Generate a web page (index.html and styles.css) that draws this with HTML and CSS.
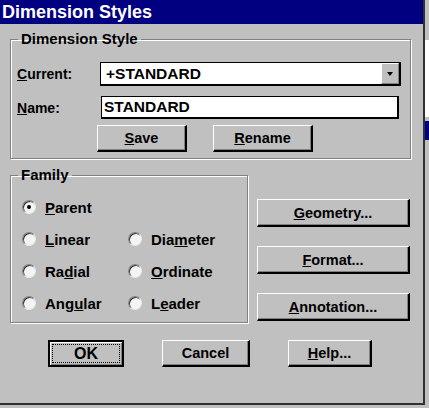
FILE: index.html
```html
<!DOCTYPE html>
<html lang="en">
<head>
    <meta charset="UTF-8">
    <title>Dimension Styles</title>
    <link rel="stylesheet" href="styles.css">
</head>
<body>
    <div class="screen">
        <div class="dialog">
            <div class="titlebar">Dimension Styles</div>

            <!-- Dimension style group -->
            <fieldset class="group style-group">
                <legend>Dimension Style</legend>
                <div class="style-rows">
                    <div class="form-row">
                        <span class="form-label"><u>C</u>urrent:</span>
                        <div class="combo">
                            <span class="combo-value">+STANDARD</span>
                            <span class="combo-btn"><span class="arrow"></span></span>
                        </div>
                    </div>
                    <div class="form-row row-gap">
                        <span class="form-label"><u>N</u>ame:</span>
                        <div class="field">STANDARD</div>
                    </div>
                    <div class="btn-row">
                        <button class="btn btn-save"><u>S</u>ave</button>
                        <button class="btn btn-rename"><u>R</u>ename</button>
                    </div>
                </div>
            </fieldset>

            <div class="middle">
                <!-- Family group -->
                <fieldset class="group family-group">
                    <legend>Family</legend>
                    <div class="radios">
                        <label class="radio-item wide"><span class="radio on"></span><span><u>P</u>arent</span></label>
                        <label class="radio-item"><span class="radio"></span><span><u>L</u>inear</span></label>
                        <label class="radio-item"><span class="radio"></span><span>Dia<u>m</u>eter</span></label>
                        <label class="radio-item"><span class="radio"></span><span>Ra<u>d</u>ial</span></label>
                        <label class="radio-item"><span class="radio"></span><span><u>O</u>rdinate</span></label>
                        <label class="radio-item"><span class="radio"></span><span>Ang<u>u</u>lar</span></label>
                        <label class="radio-item"><span class="radio"></span><span>L<u>e</u>ader</span></label>
                    </div>
                </fieldset>

                <div class="side">
                    <button class="btn side-btn"><u>G</u>eometry...</button>
                    <button class="btn side-btn"><u>F</u>ormat...</button>
                    <button class="btn side-btn"><u>A</u>nnotation...</button>
                </div>
            </div>

            <div class="footer">
                <button class="btn btn-default btn-ok"><span>OK</span></button>
                <button class="btn btn-cancel">Cancel</button>
                <button class="btn btn-help"><u>H</u>elp...</button>
            </div>
        </div>

        <!-- window behind the dialog -->
        <div class="backdrop">
            <div class="bd-white"></div>
            <div class="bd-title"></div>
        </div>
    </div>
</body>
</html>
```

FILE: styles.css
```css
/* Page */
body {
    margin: 0;
    background-color: #c0c0c0;
    font-family: "Liberation Sans", Arial, sans-serif;
    font-weight: bold;
    color: #000;
}

.screen {
    display: flex;
    width: 429px;
    height: 408px;
    overflow: hidden;
}

/* Dialog window */
.dialog {
    flex: none;
    width: 423px;
    height: 403px;
    background-color: #c0c0c0;
    border-right: 2px solid #303030;
    border-bottom: 2px solid #303030;
    display: flex;
    flex-direction: column;
}

.titlebar {
    height: 24px;
    line-height: 24px;
    background-color: #000080;
    color: #fff;
    font-size: 18px;
    padding-left: 2px;
}

/* Group boxes */
.group {
    margin: 0;
    padding: 0;
    min-width: 0;
    border: 1px solid #808080;
    box-shadow: 1px 1px 0 #fff, inset 1px 1px 0 #fff;
}

.group legend {
    font-size: 15px;
    line-height: 16px;
    padding: 0 3px;
    margin-left: 7px;
}

.style-group {
    margin: 7px 12px 0 10px;
}

.style-rows {
    padding: 15px 0 6px 6px;
}

.form-row {
    display: flex;
    align-items: center;
}

.row-gap {
    margin-top: 10px;
}

.form-label {
    width: 83px;
    font-size: 14px;
}

/* Combo box */
.combo {
    display: flex;
    box-sizing: border-box;
    width: 301px;
    height: 24px;
    background-color: #fff;
    border: 1px solid #000;
    border-right-width: 2px;
    border-bottom-width: 2px;
}

.combo-value {
    flex: 1;
    padding-left: 5px;
    font-size: 15.5px;
    line-height: 21px;
}

.combo-btn {
    box-sizing: border-box;
    width: 18px;
    background-color: #c0c0c0;
    border: 1px solid;
    border-color: #fff #808080 #808080 #fff;
    display: flex;
    align-items: center;
    justify-content: center;
}

.arrow {
    width: 0;
    height: 0;
    border-left: 3.5px solid transparent;
    border-right: 3.5px solid transparent;
    border-top: 4px solid #000;
}

.field {
    box-sizing: border-box;
    margin-left: 1px;
    width: 298px;
    height: 23px;
    background-color: #fff;
    border: 1px solid #000;
    border-right-width: 2px;
    border-bottom-width: 2px;
    padding-left: 2px;
    font-size: 15.5px;
    line-height: 20px;
}

/* Push buttons */
.btn {
    box-sizing: border-box;
    height: 27px;
    padding: 0;
    background-color: #c0c0c0;
    border: 1px solid;
    border-right-width: 2px;
    border-bottom-width: 2px;
    border-color: #fff #000 #000 #fff;
    box-shadow: inset -1px -1px 0 #808080;
    font-family: inherit;
    font-weight: bold;
    font-size: 14.5px;
    color: #000;
}

.btn u,
.radio-item u,
.form-label u {
    text-underline-offset: 1px;
}

.btn-row {
    display: flex;
    gap: 26px;
    margin-top: 6px;
    padding-left: 80px;
}

.btn-save {
    width: 90px;
}

.btn-rename {
    width: 100px;
}

/* Family + side buttons */
.middle {
    display: flex;
    margin-top: 8px;
}

.family-group {
    margin-left: 10px;
    width: 238px;
    box-sizing: border-box;
}

.radios {
    display: grid;
    grid-template-columns: 106px 1fr;
    grid-auto-rows: 32px;
    padding: 8px 0 3px 11px;
}

.radio-item {
    display: flex;
    align-items: center;
    gap: 9px;
    font-size: 15px;
}

.radio-item.wide {
    grid-column: 1 / -1;
}

.radio {
    position: relative;
    flex: none;
    box-sizing: border-box;
    width: 14px;
    height: 14px;
    border-radius: 50%;
    background-color: #f4f4f4;
    border: 1px solid;
    border-color: #808080 #e8e8e8 #e8e8e8 #808080;
    box-shadow: inset 1px 1px 0 #303030;
}

.radio.on::after {
    content: "";
    position: absolute;
    left: 4px;
    top: 4px;
    width: 4px;
    height: 4px;
    border-radius: 50%;
    background-color: #000;
}

.side {
    display: flex;
    flex-direction: column;
    gap: 19px;
    margin-left: 9px;
    padding-top: 32px;
    width: 153px;
}

.side-btn {
    height: 28px;
}

/* Bottom buttons */
.footer {
    display: flex;
    gap: 38px;
    margin-top: 17px;
    padding-left: 48px;
}

.btn-ok {
    width: 76px;
    display: flex;
    padding: 2px;
    border: 2px solid #000;
    box-shadow: inset 1px 1px 0 #fff, inset -1px -1px 0 #808080;
    font-size: 16px;
}

.btn-ok span {
    flex: 1;
    display: flex;
    align-items: center;
    justify-content: center;
    border: 1px dotted #000;
}

.btn-cancel {
    width: 88px;
}

.btn-help {
    width: 84px;
}

/* Window behind */
.backdrop {
    flex: 1;
    display: flex;
    flex-direction: column;
}

.bd-white {
    margin-top: 40px;
    height: 77px;
    background-color: #fff;
}

.bd-title {
    margin-top: 4px;
    height: 19px;
    background-color: #000080;
}
```
